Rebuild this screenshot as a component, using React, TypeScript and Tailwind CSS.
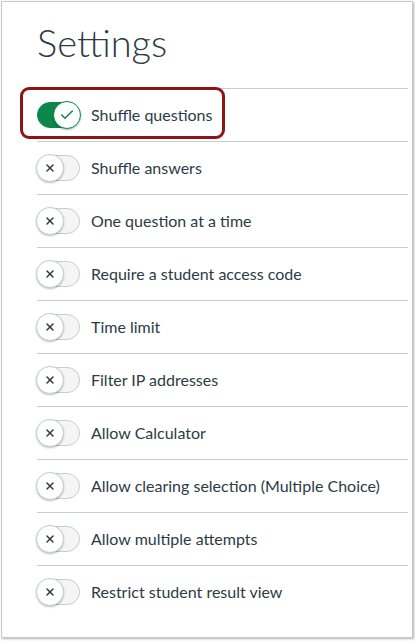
import { Check, X } from "lucide-react";

const settings = [
  { label: "Shuffle questions", on: true },
  { label: "Shuffle answers", on: false },
  { label: "One question at a time", on: false },
  { label: "Require a student access code", on: false },
  { label: "Time limit", on: false },
  { label: "Filter IP addresses", on: false },
  { label: "Allow Calculator", on: false },
  { label: "Allow clearing selection (Multiple Choice)", on: false },
  { label: "Allow multiple attempts", on: false },
  { label: "Restrict student result view", on: false },
];

function Toggle({ on }: { on: boolean }) {
  return (
    <div
      className={`relative w-[43px] h-[26px] rounded-full border shrink-0 ${
        on ? "bg-[#0b874b] border-[#0b874b]" : "bg-[#f5f5f5] border-[#c7cdd1]"
      }`}
    >
      <div
        className={`absolute top-[-2px] w-[28px] h-[28px] rounded-full bg-white flex items-center justify-center shadow-[0_1px_2px_rgba(0,0,0,0.25)] border ${
          on ? "right-[-2px] border-[#0b874b]" : "left-[-2px] border-[#c7cdd1]"
        }`}
      >
        {on ? (
          <Check size={16} strokeWidth={2.2} className="text-[#0b874b]" />
        ) : (
          <X size={12} strokeWidth={3} className="text-[#2d3b45]" />
        )}
      </div>
    </div>
  );
}

export default function App() {
  return (
    <div className="w-[415px] h-[641px] bg-white pt-px pl-px">
      <div
        className="w-[412px] h-[637px] bg-white border border-[#c8c8c8] shadow-[1px_1px_2px_rgba(0,0,0,0.3)] pl-[35px] pr-[4px]"
        style={{ fontFamily: "Lato, 'Liberation Sans', sans-serif" }}
      >
        <h1 className="h-[86px] pt-[15px] text-[38px] font-light text-[#2d3b45] leading-[50px]">
          Settings
        </h1>
        {settings.map((s) => (
          <div key={s.label} className="relative h-[53px] border-t border-[#c7cdd1] flex items-center gap-[11px]">
            {s.on && (
              <div className="absolute left-[-17px] top-[-2px] w-[205px] h-[52px] rounded-[9px] border-[3px] border-[#8e1515]" />
            )}
            <Toggle on={s.on} />
            <span className="text-[16px] text-[#2d3b45]">{s.label}</span>
          </div>
        ))}
      </div>
    </div>
  );
}
